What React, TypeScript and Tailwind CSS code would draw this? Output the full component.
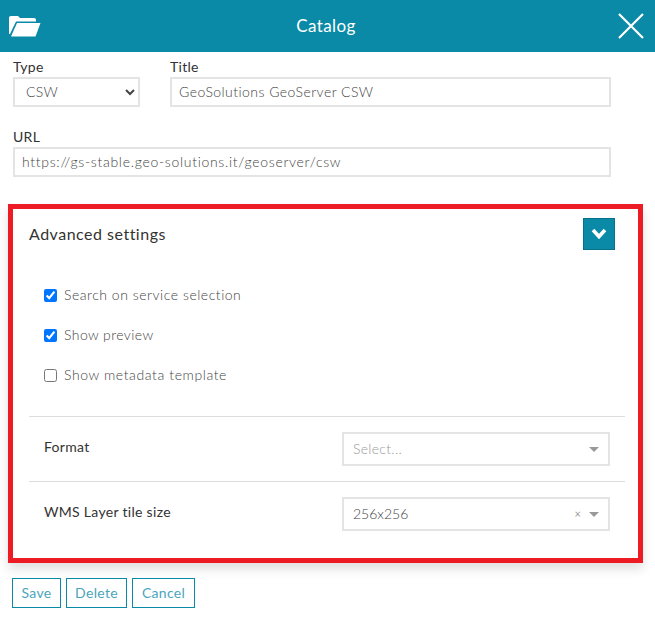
import React from "react";

const font = { fontFamily: '"Lato", "Open Sans", sans-serif' };

function Caret() {
  return <span className="w-0 h-0 border-x-[5px] border-x-transparent border-t-[5px] border-t-[#999]" />;
}

function Check({ label, checked, tracking }: { label: string; checked?: boolean; tracking: string }) {
  return (
    <label className={`flex items-center h-5 pl-[15px] text-sm font-light text-[#444] ${tracking}`}>
      <input type="checkbox" defaultChecked={checked} className="m-0 w-[13px] h-[13px] mr-[7px]" />
      {label}
    </label>
  );
}

export default function App() {
  return (
    <div className="w-[655px] h-[619px] bg-white overflow-hidden text-[#333]" style={font}>
      <header className="h-[52px] bg-[#0a8aa6] flex items-center justify-between pl-[9px] pr-[11px] text-white">
        <svg width="32" height="22" viewBox="0 0 32 22" fill="#fff">
          <path d="M0 2.5 Q0 1 2 1 H9 L11 3 H25 Q27 3 27 5 V6.5 H7 L1 19 H0 Z" />
          <path d="M8 8 H31.5 L26.5 21.5 H2 Z" />
        </svg>
        <span className="text-[17px] tracking-[0.4px] -ml-[7px]">Catalog</span>
        <svg width="26" height="26" viewBox="0 0 26 26" stroke="#fff" strokeWidth="2.2" fill="none">
          <path d="M1 1 L25 25 M25 1 L1 25" />
        </svg>
      </header>

      <div className="pl-[13px] pr-[44px] pt-[7px]">
        <div className="flex gap-[30px]">
          <div className="w-[127px]">
            <div className="text-sm leading-4 h-[18px] tracking-[0.3px]">Type</div>
            <select className="w-full h-[30px] border-2 border-[#e4e4e4] bg-white text-sm font-light text-[#444] pl-[7px] pb-[2px] tracking-[0.3px]" defaultValue="CSW">
              <option>CSW</option>
            </select>
          </div>
          <div className="flex-1">
            <div className="text-sm leading-4 h-[18px] tracking-[0.3px]">Title</div>
            <input readOnly value="GeoSolutions GeoServer CSW" className="w-full h-[30px] border-2 border-[#e4e4e4] text-sm font-light text-[#444] px-[7px] pb-[2px] outline-none tracking-[0.45px]" />
          </div>
        </div>
        <div className="mt-[22px]">
          <div className="text-sm leading-4 h-[18px] tracking-[0.3px]">URL</div>
          <input readOnly value="https://gs-stable.geo-solutions.it/geoserver/csw" className="w-full h-[30px] border-2 border-[#e4e4e4] text-sm font-light text-[#444] px-[7px] pb-[2px] outline-none tracking-[0.7px]" />
        </div>
      </div>

      <section className="mt-[27px] ml-[8px] w-[635px] h-[359px] border-[5px] border-[#ed1c24] shadow-[0_6px_10px_rgba(0,0,0,0.12)] pl-4 pr-[13px]">
        <div className="flex items-center justify-between h-[50px] pr-[10px]">
          <span className="text-base text-[#333] tracking-[0.5px]">Advanced settings</span>
          <button className="w-8 h-8 bg-[#0a8aa6] border border-[#08708a] flex items-center justify-center">
            <svg width="16" height="12" viewBox="0 0 16 12" fill="none" stroke="#fff" strokeWidth="3.6">
              <path d="M2 2 L8 8.5 L14 2" />
            </svg>
          </button>
        </div>
        <div className="mt-[26px] flex flex-col gap-5 h-[131px]">
          <Check label="Search on service selection" checked tracking="tracking-[0.53px]" />
          <Check label="Show preview" checked tracking="tracking-[0.42px]" />
          <Check label="Show metadata template" tracking="tracking-[0.6px]" />
        </div>
        <div className="border-t border-[#ddd] h-[65px] flex items-center justify-between pl-[15px] pr-[15px]">
          <span className="text-sm tracking-[0.3px] -mt-[4px]">Format</span>
          <div className="w-[268px] h-[34px] border-2 border-[#e4e4e4] flex items-center pl-[9px] pr-[9px] justify-between">
            <span className="text-sm font-light text-[#999] tracking-[0.3px]">Select...</span>
            <Caret />
          </div>
        </div>
        <div className="border-t border-[#ddd] h-[65px] flex items-center justify-between pl-[15px] pr-[15px]">
          <span className="text-sm tracking-[0.3px] -mt-[4px]">WMS Layer tile size</span>
          <div className="w-[268px] h-[34px] border-2 border-[#e4e4e4] flex items-center pl-[9px] pr-[9px]">
            <span className="text-sm font-light text-[#444] flex-1">256x256</span>
            <span className="text-[11px] text-[#999] mr-[8px]">×</span>
            <Caret />
          </div>
        </div>
      </section>

      <div className="flex gap-[5px] ml-[12px] mt-[15px]">
        {[["Save", "w-[49px]"], ["Delete", "w-[61px]"], ["Cancel", "w-[63px]"]].map(([t, w]) => (
          <button key={t} className={`${w} h-[30px] border border-[#0a8aa6] text-sm text-[#4aa5bb] bg-white tracking-[0.3px]`}>{t}</button>
        ))}
      </div>
    </div>
  );
}
